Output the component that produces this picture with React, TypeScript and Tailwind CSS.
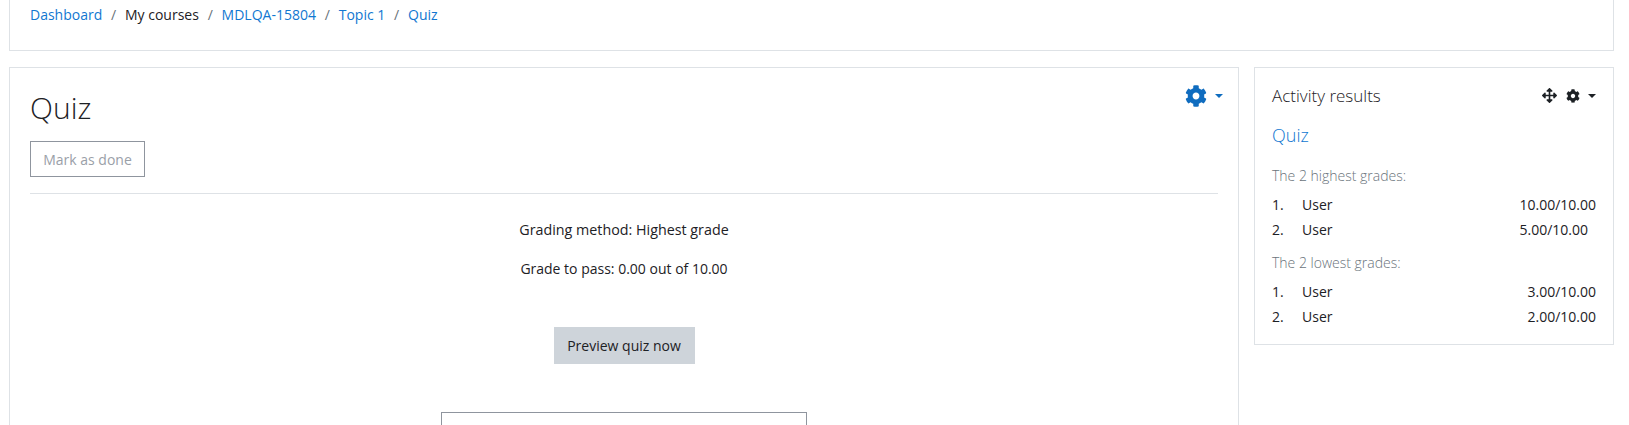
import { FaArrowsAlt, FaCog } from "react-icons/fa";

const crumbLink = "text-[#1177d1]";

const Caret = ({ className }: { className: string }) => (
    <span className={`inline-block w-0 h-0 border-x-[4px] border-x-transparent border-t-[4px] ${className}`} />
);

const Sep = () => <span className="mx-[8.8px] text-[#6a737b]">/</span>;

type Row = { n: string; name: string; grade: string; pad?: boolean };

const GradeRows = ({ rows }: { rows: Row[] }) => (
    <div>
        {rows.map((r) => (
            <div key={r.n} className="flex h-[25px] items-center text-[#1d2125]">
                <span className="w-[30px]">{r.n}</span>
                <span className="flex-1">{r.name}</span>
                <span className={r.pad ? "pr-[8px]" : ""}>{r.grade}</span>
            </div>
        ))}
    </div>
);

export default function App() {
    return (
        <div className="h-[425px] overflow-hidden bg-white pl-[9px] pr-[15px] text-[14px] font-['Open_Sans',sans-serif] text-[#1d2125]">
            <div className="h-[51px] border-x border-b border-[#dee2e6] pl-[20px] pt-[4px] leading-[22px]">
                <a className={crumbLink}>Dashboard</a>
                <Sep />
                <span>My courses</span>
                <Sep />
                <a className={crumbLink}>MDLQA-15804</a>
                <Sep />
                <a className={crumbLink}>Topic 1</a>
                <Sep />
                <a className={crumbLink}>Quiz</a>
            </div>

            <div className="mt-[16px] flex items-start gap-[15px]">
                <div className="h-[400px] w-[1230px] shrink-0 border border-[#dee2e6] px-[20px] pt-[20px]">
                    <div className="flex items-start justify-between">
                        <h1 className="text-[30px] font-light leading-[40px] text-[#1d2125]">Quiz</h1>
                        <div className="-mr-[5px] -mt-[3px] flex items-center gap-[8px] text-[#0f6cbf]">
                            <FaCog className="text-[22px]" />
                            <Caret className="border-t-[#0f6cbf]" />
                        </div>
                    </div>
                    <button className="mt-[13px] block h-[36px] w-[115px] border border-[#8f959e] text-[14px] text-[#9aa0a8]">
                        Mark as done
                    </button>
                    <div className="mt-[16px] w-[1188px] border-t border-[#dee2e6]" />
                    <div className="w-[1188px] text-center">
                        <p className="mt-[25px] text-[14.3px] leading-[21px]">Grading method: Highest grade</p>
                        <p className="mt-[18px] leading-[21px]">Grade to pass: 0.00 out of 10.00</p>
                        <button className="mt-[48px] h-[37px] w-[141px] bg-[#ced4da] text-[14px] text-[#1d2125]">
                            Preview quiz now
                        </button>
                        <div className="mx-auto mt-[48px] h-[40px] w-[366px] border border-[#8f959e]" />
                    </div>
                </div>

                <div className="h-[278px] w-[360px] shrink-0 border border-[#dee2e6] px-[17px] pt-[15px]">
                    <div className="flex items-center justify-between">
                        <h5 className="text-[17px] font-light leading-[25px]">Activity results</h5>
                        <div className="flex items-center text-[#1d2125]">
                            <FaArrowsAlt className="text-[15px]" />
                            <FaCog className="ml-[9px] text-[14px]" />
                            <Caret className="ml-[8px] border-t-[#1d2125]" />
                        </div>
                    </div>
                    <a className="mt-[14px] block text-[18px] font-light leading-[26px] text-[#1177d1]">Quiz</a>
                    <p className="mt-[17px] font-light leading-[21px] text-[#6a737b]">The 2 highest grades:</p>
                    <div className="mt-[6px]">
                        <GradeRows
                            rows={[
                                { n: "1.", name: "User", grade: "10.00/10.00" },
                                { n: "2.", name: "User", grade: "5.00/10.00", pad: true },
                            ]}
                        />
                    </div>
                    <p className="mt-[10px] font-light leading-[21px] text-[#6a737b]">The 2 lowest grades:</p>
                    <div className="mt-[6px]">
                        <GradeRows
                            rows={[
                                { n: "1.", name: "User", grade: "3.00/10.00" },
                                { n: "2.", name: "User", grade: "2.00/10.00" },
                            ]}
                        />
                    </div>
                </div>
            </div>
        </div>
    );
}
